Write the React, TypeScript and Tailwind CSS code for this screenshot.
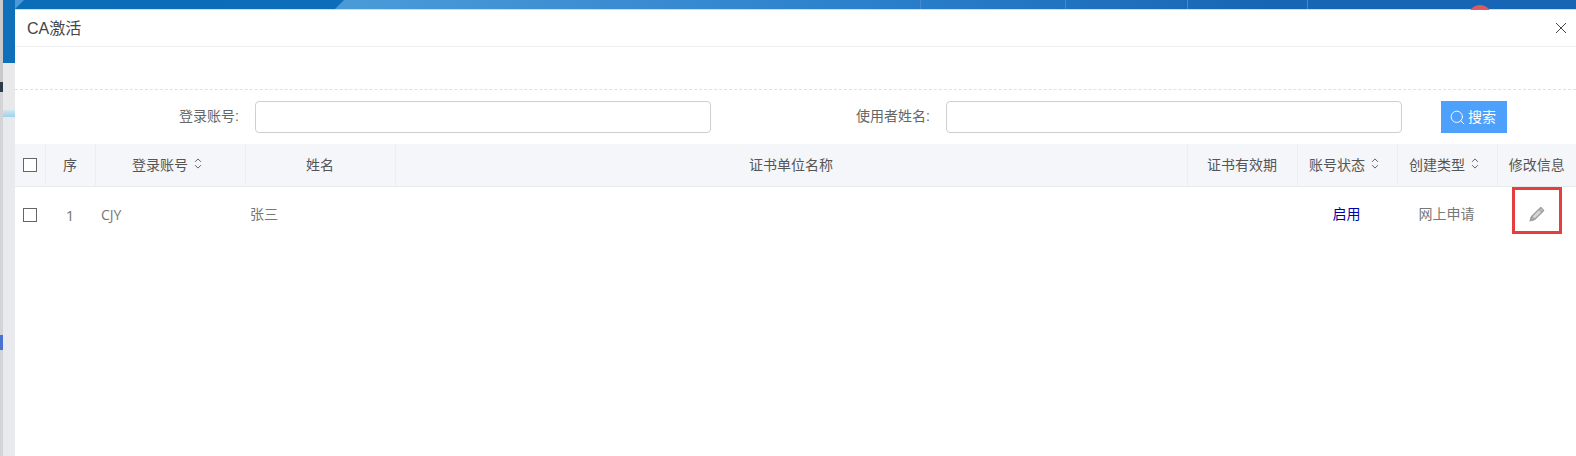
import { Search } from 'lucide-react'

const columns = [
  { label: '', width: 'w-[30px]' },
  { label: '序', width: 'w-[50px]' },
  { label: '登录账号', width: 'w-[150px]', sort: true },
  { label: '姓名', width: 'w-[150px]' },
  { label: '证书单位名称', width: '' },
  { label: '证书有效期', width: 'w-[110px]' },
  { label: '账号状态', width: 'w-[100px]', sort: true },
  { label: '创建类型', width: 'w-[100px]', sort: true },
  { label: '修改信息', width: 'w-[79px]' },
]

function SortIcon() {
  return (
    <svg viewBox="0 0 8 12" className="mr-[6px] ml-[6px] inline-block h-[11px] w-[8px] align-[1px]" fill="none" stroke="#555" strokeWidth="1">
      <path d="M0.8 4.2 4 1l3.2 3.2M0.8 7.8 4 11l3.2-3.2" />
    </svg>
  )
}

function PencilIcon() {
  return (
    <svg viewBox="0 0 16 16" className="h-4 w-4" fill="none" stroke="#a0a0a0" strokeWidth="1.4">
      <path d="M11.8 1.6 14.6 4.4 5.6 13.4 1.4 14.6 2.6 10.4Z" strokeLinejoin="round" fill="#d6d6d6" />
      <path d="M10.2 3.2 13 6M2.6 10.4 5.6 13.4" />
      <path d="M1.4 14.6 2 12.4 3.6 14Z" fill="#8f8f8f" />
    </svg>
  )
}

function CloseIcon() {
  return (
    <svg viewBox="0 0 14 14" className="h-[14px] w-[14px]" fill="none" stroke="#444" strokeWidth="1">
      <path d="M2 2l10 10M12 2 2 12" />
    </svg>
  )
}

function Checkbox() {
  return <span className="block h-[14px] w-[14px] border border-[#666] bg-white" />
}

export default function App() {
  return (
    <div className="flex h-[456px] w-[1576px] overflow-hidden bg-white font-['Liberation_Sans','Noto_Sans_CJK_SC',sans-serif]">
      {/* page behind the dialog, left edge */}
      <div className="flex w-[15px] shrink-0">
        <div className="flex w-[3px] flex-col bg-[#d4d4d6]">
          <div className="h-[82px] bg-[#c9c9cb]" />
          <div className="h-[10px] bg-[#2c3a4a]" />
          <div className="h-[243px]" />
          <div className="h-[15px] bg-[#4a72d0]" />
        </div>
        <div className="flex w-[12px] flex-col">
          <div className="h-[63px] bg-[#0f6fba]" />
          <div className="h-[47px] bg-[#e9e9eb]" />
          <div className="h-[7px] bg-gradient-to-b from-[#d2e6f2] to-[#9fd0ea]" />
          <div className="flex-1 bg-[#e8eaee]" />
        </div>
      </div>

      <div className="flex min-w-0 flex-1 flex-col">
        {/* top strip of the page behind */}
        <div className="relative h-[10px] shrink-0 overflow-hidden bg-gradient-to-r from-[#4a9ad8] from-[22%] via-[#2a80cc] via-[55%] to-[#1766b6] to-[80%]">
          <div className="absolute top-0 left-0 h-[9px] w-[320px] origin-bottom-left -skew-x-[45deg] bg-gradient-to-r from-[#0b6cb8] to-[#0c6dbb]" />
          <div className="absolute top-[9px] left-0 h-px w-full bg-[#bfe3f8]" />
          <div className="absolute top-0 left-[905px] h-[9px] w-px bg-[#4b87cc]" />
          <div className="absolute top-0 left-[1050px] h-[9px] w-px bg-[#4b87cc]" />
          <div className="absolute top-0 left-[1172px] h-[9px] w-px bg-[#4b87cc]" />
          <div className="absolute top-0 left-[1292px] h-[9px] w-px bg-[#4b87cc]" />
          <div className="absolute top-[5px] left-[1453px] h-[24px] w-[24px] rounded-full bg-[#dd5a5f]" />
        </div>

        <div className="relative flex-1 bg-white">
          <div className="flex h-[37px] items-center justify-between border-b border-[#eeeeee] pr-[8px] pl-3">
            <span className="pt-px text-[16px] text-[#444]">CA激活</span>
            <CloseIcon />
          </div>

          <div className="h-[43px] border-b border-dashed border-[#d9e3e6]" />

          <div className="flex h-[54px] items-start pt-[11px]">
            <label className="w-[240px] pt-[5px] pr-[16px] text-right text-[14px] leading-[20px] text-[#666]">登录账号:</label>
            <input className="h-[32px] w-[456px] rounded-[4px] border border-[#cfcfcf] bg-white" />
            <label className="w-[235px] pt-[5px] pr-[16px] text-right text-[14px] leading-[20px] text-[#666]">使用者姓名:</label>
            <input className="h-[32px] w-[456px] rounded-[4px] border border-[#cfcfcf] bg-white" />
            <button className="ml-[39px] flex h-[32px] w-[66px] items-center justify-center gap-[2px] bg-[#4da0fb] pr-[3px] text-[14px] text-white">
              <Search size={17} strokeWidth={1.3} />
              搜索
            </button>
          </div>

          <table className="w-full table-fixed border-collapse text-[14px]">
            <colgroup>
              {columns.map((col, i) => (
                <col key={i} className={col.width} />
              ))}
            </colgroup>
            <thead>
              <tr className="h-[42px] border-b border-[#e8eaec] bg-[#f5f6fa] text-[#555]">
                {columns.map((col, i) => (
                  <th key={i} className="border-r border-[#eeeeee] p-0 pt-[2px] text-center font-normal whitespace-nowrap last:border-r-0">
                    {i === 0 ? (
                      <span className="mb-[2px] ml-2 block w-fit"><Checkbox /></span>
                    ) : (
                      <>
                        {col.label}
                        {col.sort ? <SortIcon /> : null}
                      </>
                    )}
                  </th>
                ))}
              </tr>
            </thead>
            <tbody>
              <tr className="h-[57px] text-[#777]">
                <td className="p-0"><span className="ml-2 block w-fit"><Checkbox /></span></td>
                <td className="p-0 text-center font-['Open_Sans','Noto_Sans_CJK_SC',sans-serif] text-[15px]">1</td>
                <td className="px-[6px] font-['Open_Sans','Noto_Sans_CJK_SC',sans-serif]">CJY</td>
                <td className="px-[5px]">张三</td>
                <td />
                <td />
                <td className="pr-[1px] text-center text-[#0000a8]">启用</td>
                <td className="pr-[1px] text-center">网上申请</td>
                <td className="pb-[2px]"><span className="flex justify-center"><PencilIcon /></span></td>
              </tr>
            </tbody>
          </table>

          {/* red annotation box around the edit icon */}
          <div className="absolute top-[177px] left-[1497px] h-[47px] w-[50px] border-[3px] border-[#e53e3e]" />
        </div>
      </div>
    </div>
  )
}
